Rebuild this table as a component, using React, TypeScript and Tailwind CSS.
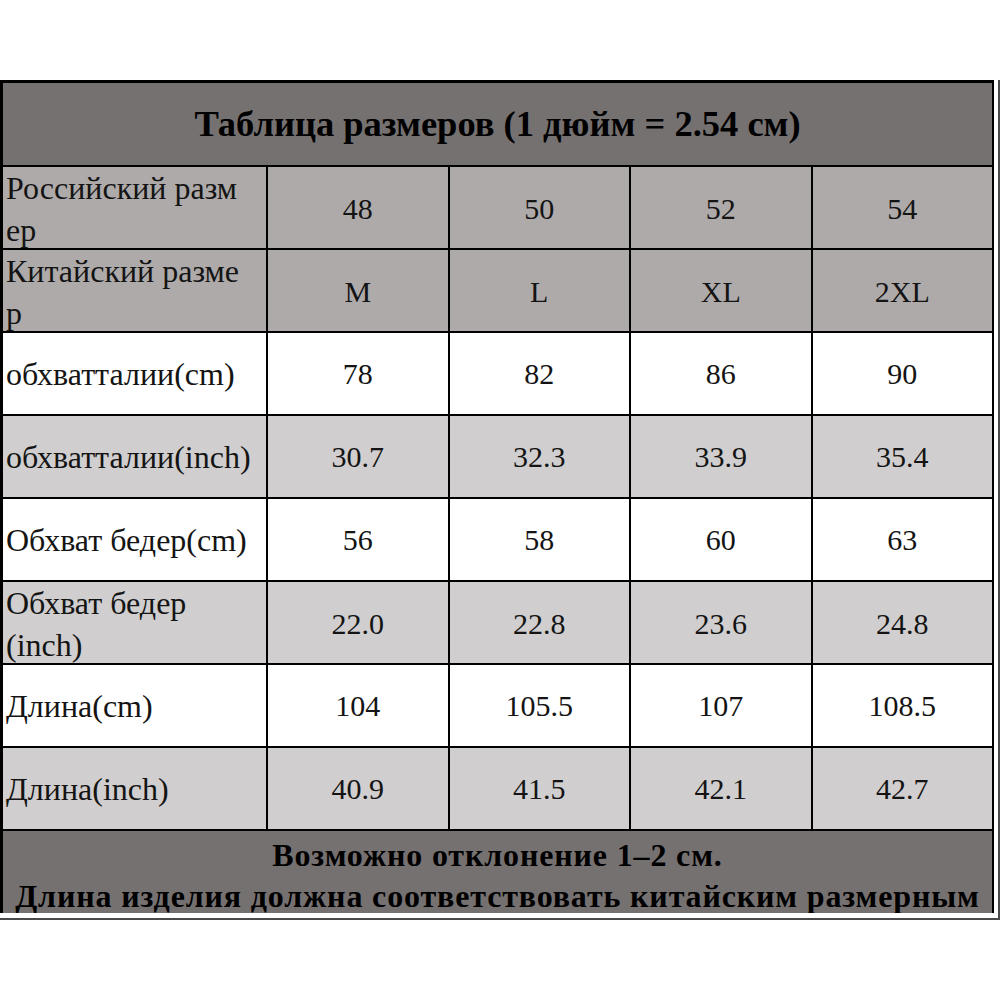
import React from 'react'

type Row = {
  label: React.ReactNode
  values: string[]
  bg: string
}

const rows: Row[] = [
  {
    label: (
      <>
        Российский разм
        <br />
        ер
      </>
    ),
    values: ['48', '50', '52', '54'],
    bg: 'bg-[#aeaaaa]',
  },
  {
    label: (
      <>
        Китайский разме
        <br />
        р
      </>
    ),
    values: ['M', 'L', 'XL', '2XL'],
    bg: 'bg-[#aeaaaa]',
  },
  { label: 'обхватталии(cm)', values: ['78', '82', '86', '90'], bg: 'bg-white' },
  { label: 'обхватталии(inch)', values: ['30.7', '32.3', '33.9', '35.4'], bg: 'bg-[#d0cece]' },
  { label: 'Обхват бедер(cm)', values: ['56', '58', '60', '63'], bg: 'bg-white' },
  {
    label: (
      <>
        Обхват бедер
        <br />
        (inch)
      </>
    ),
    values: ['22.0', '22.8', '23.6', '24.8'],
    bg: 'bg-[#d0cece]',
  },
  { label: 'Длина(cm)', values: ['104', '105.5', '107', '108.5'], bg: 'bg-white' },
  { label: 'Длина(inch)', values: ['40.9', '41.5', '42.1', '42.7'], bg: 'bg-[#d0cece]' },
]

export default function App() {
  return (
    <div className="w-[1001px] h-[1001px] bg-white pt-[80px] font-['Liberation_Serif',serif] text-[#141414]">
      {/* outer double frame */}
      <div className="w-[1000px] border-r-2 border-b-2 border-[#4a4a4a] pr-[4px] pb-[5px]">
        <div className="border-t-[3px] border-l-[3px] border-r-2 border-black">
          {/* title */}
          <div className="h-[84px] bg-[#767171] border-b-2 border-black flex items-center justify-center">
            <h1 className="text-[36.5px] font-bold text-black leading-none whitespace-nowrap">
              Таблица размеров (1 дюйм = 2.54 см)
            </h1>
          </div>

          {/* size rows */}
          {rows.map((row, i) => (
            <div
              key={i}
              className={`grid grid-cols-[263px_1fr_1fr_1fr_1fr] h-[83px] border-b-2 border-black ${row.bg}`}
            >
              <div className="flex items-center pl-[3px] text-[32px] leading-[42px] whitespace-nowrap">
                <span>{row.label}</span>
              </div>
              {row.values.map(v => (
                <div
                  key={v}
                  className="border-l-2 border-black flex items-center justify-center text-[30px] leading-none"
                >
                  {v}
                </div>
              ))}
            </div>
          ))}

          {/* note */}
          <div className="h-[82px] bg-[#767171] overflow-hidden pt-[4px] text-center text-[32px] font-bold leading-[41px] text-black tracking-[0.85px] whitespace-nowrap">
            <p>Возможно отклонение 1–2 см.</p>
            <p>Длина изделия должна соответствовать китайским размерным</p>
          </div>
        </div>
      </div>
    </div>
  )
}
